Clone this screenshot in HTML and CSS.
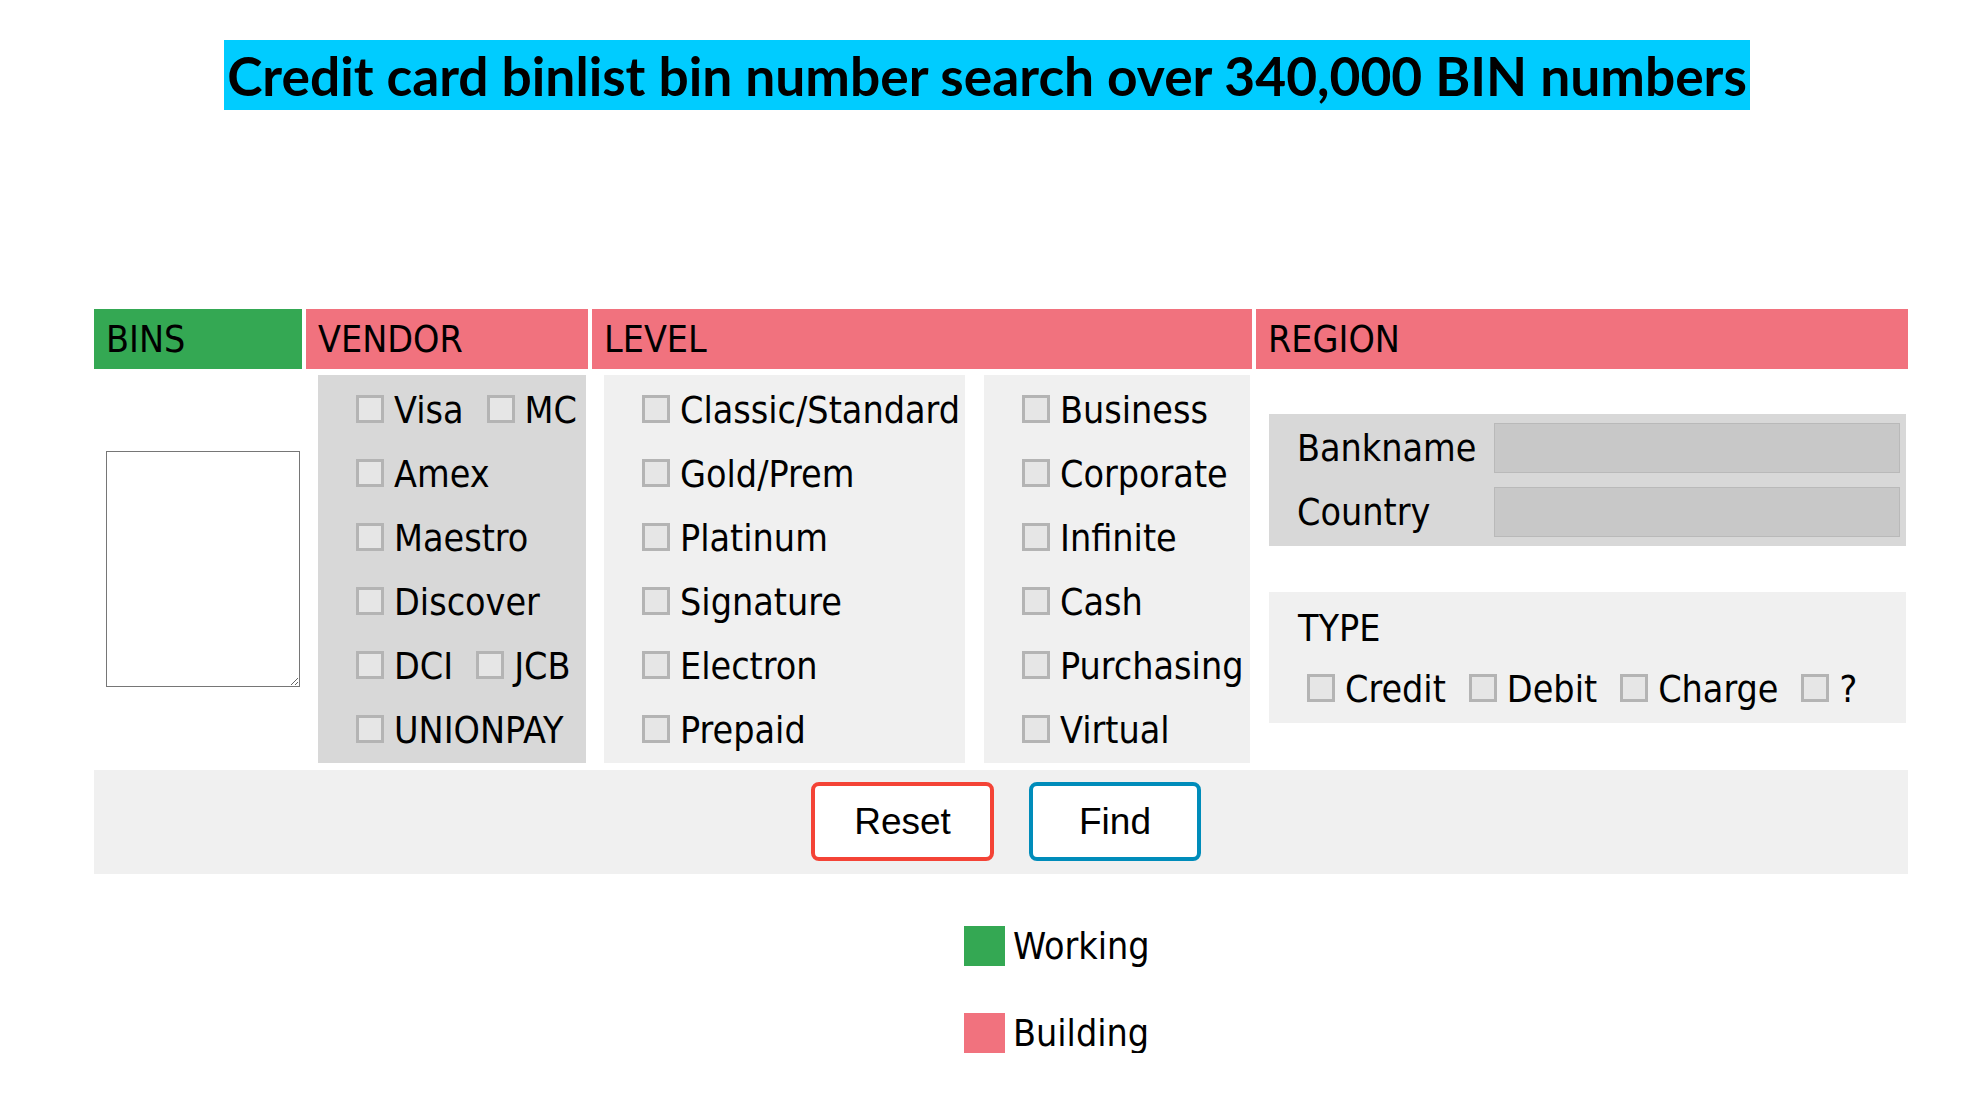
FILE: index.html
```html
<!DOCTYPE html>
<html lang="en">
<head>
<meta charset="utf-8">
<title>BIN search</title>
<link rel="stylesheet" href="styles.css">
</head>
<body>
<h1 class="title">Credit card binlist bin number search over 340,000 BIN numbers</h1>

<form class="search">
  <div class="grid">
    <div class="hd hd-working">BINS</div>
    <div class="hd hd-building">VENDOR</div>
    <div class="hd hd-building">LEVEL</div>
    <div class="hd hd-building">REGION</div>

    <div class="cell cell-bins"><textarea class="bins-input"></textarea></div>

    <div class="cell cell-vendor">
      <div class="box box-dark vendor-box">
        <div class="opt-row"><label class="opt"><input type="checkbox">Visa</label><label class="opt"><input type="checkbox">MC</label></div>
        <div class="opt-row"><label class="opt"><input type="checkbox">Amex</label></div>
        <div class="opt-row"><label class="opt"><input type="checkbox">Maestro</label></div>
        <div class="opt-row"><label class="opt"><input type="checkbox">Discover</label></div>
        <div class="opt-row"><label class="opt"><input type="checkbox">DCI</label><label class="opt"><input type="checkbox">JCB</label></div>
        <div class="opt-row"><label class="opt"><input type="checkbox">UNIONPAY</label></div>
      </div>
    </div>

    <div class="cell cell-level">
      <div class="box box-light level-a">
        <div class="opt-row"><label class="opt"><input type="checkbox">Classic/Standard</label></div>
        <div class="opt-row"><label class="opt"><input type="checkbox">Gold/Prem</label></div>
        <div class="opt-row"><label class="opt"><input type="checkbox">Platinum</label></div>
        <div class="opt-row"><label class="opt"><input type="checkbox">Signature</label></div>
        <div class="opt-row"><label class="opt"><input type="checkbox">Electron</label></div>
        <div class="opt-row"><label class="opt"><input type="checkbox">Prepaid</label></div>
      </div>
      <div class="box box-light level-b">
        <div class="opt-row"><label class="opt"><input type="checkbox">Business</label></div>
        <div class="opt-row"><label class="opt"><input type="checkbox">Corporate</label></div>
        <div class="opt-row"><label class="opt"><input type="checkbox">Infinite</label></div>
        <div class="opt-row"><label class="opt"><input type="checkbox">Cash</label></div>
        <div class="opt-row"><label class="opt"><input type="checkbox">Purchasing</label></div>
        <div class="opt-row"><label class="opt"><input type="checkbox">Virtual</label></div>
      </div>
    </div>

    <div class="cell cell-region">
      <div class="bank-box">
        <span class="field-label">Bankname</span><input class="field-input" type="text">
        <span class="field-label">Country</span><input class="field-input" type="text">
      </div>
      <div class="type-box">
        <div class="type-title">TYPE</div>
        <div class="type-row">
          <label class="opt"><input type="checkbox">Credit</label>
          <label class="opt"><input type="checkbox">Debit</label>
          <label class="opt"><input type="checkbox">Charge</label>
          <label class="opt"><input type="checkbox">?</label>
        </div>
      </div>
    </div>
  </div>

  <div class="actions">
    <button type="reset" class="btn btn-reset">Reset</button>
    <button type="button" class="btn btn-find">Find</button>
  </div>
</form>

<div class="legend">
  <div class="legend-row"><span class="swatch swatch-working"></span>Working</div>
  <div class="legend-row"><span class="swatch swatch-building"></span>Building</div>
</div>
</body>
</html>
```

FILE: styles.css
```css
* { box-sizing: border-box; }

body {
  margin: 0;
  background: #fff;
  color: #000;
  font-family: "DejaVu Sans", "Noto Sans", sans-serif;
  font-stretch: condensed;
  font-size: 37.3px;
}

.title {
  display: table;
  margin: 40px auto 0;
  padding: 0 3px;
  background: #00ccff;
  font-family: "Lato", "Open Sans", sans-serif;
  font-stretch: normal;
  font-weight: 700;
  font-size: 53.3px;
  line-height: 70px;
  white-space: nowrap;
}

.search {
  margin: 199px 0 0 94px;
  width: 1814px;
}

.grid {
  display: grid;
  grid-template-columns: 208px 282px 660px 652px;
  grid-template-rows: 60px 388px;
  column-gap: 4px;
  row-gap: 6px;
}

.hd {
  display: flex;
  align-items: center;
  padding-left: 12px;
  line-height: 60px;
}
.hd-working { background: #34a853; }
.hd-building { background: #f1727e; }

.cell-bins {
  display: flex;
  align-items: center;
  padding-left: 12px;
}

.bins-input {
  width: 194px;
  height: 236px;
  border: 1px solid #767676;
  background: #fff;
  margin: 0;
}

.cell-vendor { padding-left: 12px; }

.box {
  height: 388px;
  padding: 2px 0 2px 38px;
}
.box-dark { background: #d8d8d8; }
.box-light { background: #f0f0f0; }
.vendor-box { width: 268px; }

.cell-level {
  display: flex;
  gap: 19px;
  padding-left: 12px;
}
.level-a { width: 361px; }
.level-b { width: 266px; }

.opt-row {
  display: flex;
  align-items: center;
  gap: 23px;
  height: 64px;
}

.opt {
  display: flex;
  align-items: center;
  gap: 10px;
  white-space: nowrap;
  line-height: 1.2;
  padding-top: 2px;
}

.opt input {
  appearance: none;
  -webkit-appearance: none;
  width: 28px;
  height: 28px;
  margin: 0 0 2px;
  border: 3px solid #b4b4b4;
  background: #e6e6e6;
  flex: none;
}

.cell-region { padding: 39px 0 0 13px; }

.bank-box {
  display: grid;
  grid-template-columns: 197px 406px;
  row-gap: 14px;
  align-items: center;
  width: 637px;
  padding: 9px 6px 9px 28px;
  background: #d8d8d8;
}

.field-input {
  height: 50px;
  margin: 0;
  border: 1px solid #b9b9b9;
  background: #c8c8c8;
}

.type-box {
  width: 637px;
  height: 131px;
  margin-top: 46px;
  padding: 14px 0 0 29px;
  background: #f0f0f0;
}

.type-title { line-height: 44px; }

.type-row {
  display: flex;
  align-items: center;
  gap: 23px;
  height: 44px;
  margin-top: 16px;
  padding-left: 9px;
}

.actions {
  display: flex;
  justify-content: center;
  gap: 35px;
  height: 104px;
  margin-top: 7px;
  padding: 12px 0 0 10px;
  background: #f0f0f0;
}

.btn {
  height: 79px;
  padding: 0;
  background: #fff;
  border: 4px solid;
  border-radius: 8px;
  font-family: "Liberation Sans", Arial, sans-serif;
  font-size: 37px;
  color: #000;
}
.btn-reset { width: 183px; border-color: #f44336; }
.btn-find { width: 172px; border-color: #008cba; }

.legend {
  margin-top: 52px;
  padding-left: 964px;
  display: flex;
  flex-direction: column;
  gap: 47px;
}

.legend-row {
  display: flex;
  align-items: center;
  gap: 8px;
  height: 40px;
}

.swatch {
  width: 41px;
  height: 40px;
}
.swatch-working { background: #34a853; }
.swatch-building { background: #f1727e; }
```
